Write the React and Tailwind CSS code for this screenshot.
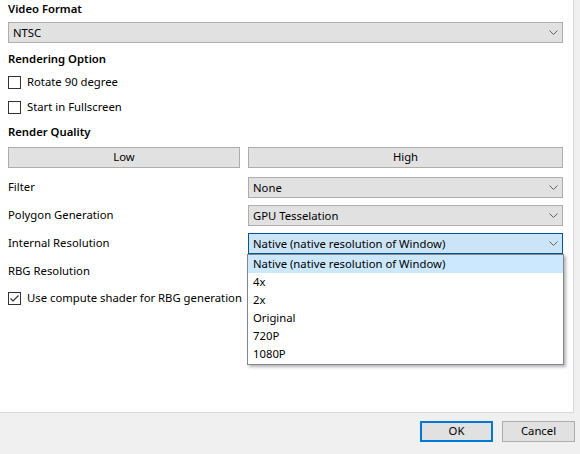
import { useState } from 'react';

const font = { fontFamily: '"Noto Sans", "Segoe UI", sans-serif' };

function Chevron() {
  return (
    <svg width="9" height="5" viewBox="0 0 9 5" className="shrink-0">
      <path d="M0.5 0.5 L4.5 4.5 L8.5 0.5" fill="none" stroke="#606060" strokeWidth="1" />
    </svg>
  );
}

function Select({ value, active = false, children }) {
  return (
    <div className="relative">
      <div
        className={`h-[21px] flex items-center justify-between pl-[4px] pr-[4px] border ${
          active ? 'bg-[#cce4f7] border-[#005499]' : 'bg-[#e1e1e1] border-[#adadad]'
        }`}
      >
        <span className="leading-none">{value}</span>
        <Chevron />
      </div>
      {children}
    </div>
  );
}

function Checkbox({ label, checked = false }) {
  return (
    <label className="flex items-center h-4 pl-2 gap-[6px]">
      <span className="w-[13px] h-[13px] border border-[#333333] bg-white flex items-center justify-center">
        {checked && (
          <svg width="11" height="11" viewBox="0 0 11 11">
            <path d="M1.5 5.5 L4 8 L9.5 2.5" fill="none" stroke="#333333" strokeWidth="1.2" />
          </svg>
        )}
      </span>
      <span>{label}</span>
    </label>
  );
}

function Button({ children, primary = false, className = '' }) {
  return (
    <button
      className={`h-[21px] bg-[#e1e1e1] flex items-center justify-center ${
        primary ? 'border-2 border-[#0078d7]' : 'border border-[#adadad]'
      } ${className}`}
    >
      {children}
    </button>
  );
}

const resolutions = ['Native (native resolution of Window)', '4x', '2x', 'Original', '720P', '1080P'];

export default function App() {
  const [quality] = useState('High');

  return (
    <div className="w-[580px] h-[454px] bg-[#f0f0f0] text-[11.3px] text-black flex flex-col" style={font}>
      {/* Settings panel */}
      <div className="w-[574px] h-[413px] bg-white border-r border-b border-[#d9d9d9] shrink-0">
        <div className="pl-2 pr-[10px]">
          <div className="h-4 leading-4 mt-px font-semibold">Video Format</div>
          <div className="mt-[5px]">
            <Select value="NTSC" />
          </div>
          <div className="mt-2 h-4 leading-4 font-semibold">Rendering Option</div>
        </div>

        <div className="mt-[7px]">
          <Checkbox label="Rotate 90 degree" />
        </div>
        <div className="mt-[9px]">
          <Checkbox label="Start in Fullscreen" />
        </div>

        <div className="pl-2 pr-[10px]">
          <div className="mt-[9px] h-4 leading-4 font-semibold">Render Quality</div>

          <div className="mt-[7px] grid grid-cols-[232px_1fr] gap-x-2">
            <Button>Low</Button>
            <Button>{quality}</Button>
          </div>

          <div className="mt-[9px] grid grid-cols-[232px_1fr] gap-x-2 gap-y-[7px] items-center">
            <div>Filter</div>
            <Select value="None" />
            <div>Polygon Generation</div>
            <Select value="GPU Tesselation" />
            <div>Internal Resolution</div>
            <Select value="Native (native resolution of Window)" active>
              <ul className="absolute z-10 top-full -left-px w-[317px] h-[111px] bg-white border border-[#828790] shadow-[2px_2px_3px_rgba(0,0,0,0.3)]">
                {resolutions.map((r, i) => (
                  <li
                    key={r}
                    className={`h-[18px] pl-[5px] flex items-center ${i === 0 ? 'bg-[#cce8ff]' : ''}`}
                  >
                    {r}
                  </li>
                ))}
              </ul>
            </Select>
            <div className="h-[21px] flex items-center">RBG Resolution</div>
            <div className="h-[21px]" />
          </div>
        </div>

        <div className="mt-2">
          <Checkbox label="Use compute shader for RBG generation" checked />
        </div>
      </div>

      {/* Dialog buttons */}
      <div className="flex justify-end gap-[9px] pt-2 pr-[5px]">
        <Button primary className="w-[73px]">OK</Button>
        <Button className="w-[73px]">Cancel</Button>
      </div>
    </div>
  );
}
